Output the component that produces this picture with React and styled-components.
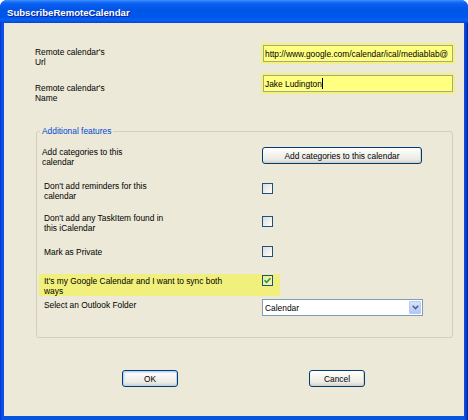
import React from "react";
import styled, { createGlobalStyle } from "styled-components";

const Global = createGlobalStyle`
  html, body { margin: 0; padding: 0; background: #ffffff; }
  body { font-family: "Liberation Sans", Arial, sans-serif; }
  * { box-sizing: border-box; }
`;

const Window = styled.div`
  width: 468px;
  height: 420px;
  display: flex;
  flex-direction: column;
  background: linear-gradient(to right, #0831d9 0px, #0a52e6 2px, #0855dd 4px, #0855dd 464px, #0a3fd0 466px, #001ea0 468px);
  border-radius: 7px 7px 0 0;
  overflow: hidden;
  font-family: "Liberation Sans", Arial, sans-serif;
`;

const TitleBar = styled.div`
  height: 23px;
  flex: none;
  display: flex;
  align-items: center;
  padding: 2px 0 0 7px;
  background: linear-gradient(to bottom, #3f95ff 0px, #1a6ff8 2px, #0a5ef0 4px, #0055e8 10px, #0056ec 17px, #0a5ff4 20px, #0048d8 23px);
  color: #ffffff;
  font-weight: bold;
  font-size: 9.6px;
  text-shadow: 1px 1px 0 #0a1e8c;
  letter-spacing: 0px;
`;

const Body = styled.div`
  flex: 1;
  margin: 0 4px 4px 4px;
  background: #ece9d8;
  padding: 20px 0 0 0;
  font-size: 8.4px;
  line-height: 10px;
  color: #000000;
`;

const TopRow = styled.div`
  display: grid;
  grid-template-columns: 226px 194px;
  height: ${(p) => p.$h}px;
  padding-left: 31px;
  align-items: start;
`;

const Label = styled.div`
  margin-top: ${(p) => p.$t || 0}px;
  margin-left: ${(p) => p.$l || 0}px;
  white-space: normal;
`;

const TextGlow = styled.div`
  padding: 2px;
  background: #f4f27e;
  width: 194px;
`;

const TextBox = styled.div`
  height: 17px;
  border: 1px solid #a4a98e;
  background: #ffff80;
  padding: 0 1px 0 1px;
  display: flex;
  align-items: center;
  white-space: nowrap;
  overflow: hidden;
`;

const Caret = styled.span`
  display: inline-block;
  width: 1px;
  height: 11px;
  background: #000000;
  margin-left: 0px;
`;

const Group = styled.fieldset`
  margin: ${(p) => p.$mt}px 0 0 32px;
  width: 417px;
  height: 212px;
  border: 1px solid #d0d0bf;
  border-radius: 3px;
  padding: 11px 0 0 0;
  min-width: 0;
`;

const Legend = styled.legend`
  margin-left: 3px;
  padding: 0 2px;
  color: #0046d5;
  font-size: 8.4px;
  line-height: 10px;
`;

const FieldRow = styled.div`
  display: grid;
  grid-template-columns: 218px auto;
  align-items: start;
  height: ${(p) => p.$h}px;
  margin-left: 2px;
  padding-left: 5px;
  width: ${(p) => (p.$hl ? "241px" : "auto")};
  background: ${(p) => (p.$hl ? "#f2f07c" : "transparent")};
`;

const Control = styled.div`
  margin-top: ${(p) => p.$t || 0}px;
`;

const XPButton = styled.button`
  width: ${(p) => p.$w}px;
  height: 17px;
  padding: 0;
  margin: 0;
  font-family: "Liberation Sans", Arial, sans-serif;
  font-size: 8.4px;
  color: #000000;
  border: 1px solid #003c74;
  border-radius: 3px;
  background: linear-gradient(to bottom, #ffffff 0%, #f5f4ef 40%, #ecebe6 75%, #d6d0c5 100%);
  box-shadow: ${(p) =>
    p.$default
      ? "inset 0 0 0 1px #bcd4f6, inset 1px 1px 0 1px #cee7ff"
      : "inset -1px -1px 0 #d8d2c6"};
  display: flex;
  align-items: center;
  justify-content: center;
`;

const Check = styled.div`
  width: 11px;
  height: 11px;
  border: 1px solid #1c5180;
  background: ${(p) =>
    p.$on
      ? "linear-gradient(135deg, #e8e8a8 0%, #f4f4b8 100%)"
      : "linear-gradient(135deg, #dcdcd7 0%, #f4f4f1 70%, #ffffff 100%)"};
  display: flex;
  align-items: center;
  justify-content: center;
`;

const Select = styled.div`
  width: 161px;
  height: 17px;
  border: 1px solid #7f9db9;
  background: #ffffff;
  display: flex;
  align-items: center;
  padding: 1px;
`;

const SelectText = styled.div`
  flex: 1;
  padding-left: 1px;
`;

const DropBtn = styled.div`
  width: 12px;
  height: 13px;
  border: 1px solid #bbcaf1;
  border-radius: 1px;
  background: linear-gradient(to bottom, #d6e2fd 0%, #c1d3fb 60%, #b0c6f6 100%);
  display: flex;
  align-items: center;
  justify-content: center;
`;

const Footer = styled.div`
  display: flex;
  gap: 131px;
  margin-top: 32px;
  padding-left: 118px;
`;

function CheckBox({ on }) {
  return (
    <Check $on={on}>
      {on && (
        <svg width="7" height="7" viewBox="0 0 7 7">
          <path d="M0.5 3.2 L2.6 5.3 L6.5 1.2" fill="none" stroke="#21a121" strokeWidth="1.6" />
        </svg>
      )}
    </Check>
  );
}

export default function App() {
  return (
    <>
      <Global />
      <Window>
        <TitleBar>SubscribeRemoteCalendar</TitleBar>
        <Body>
          <TopRow $h={30}>
            <Label $t={4}>
              Remote calendar's
              <br />
              Url
            </Label>
            <TextGlow>
              <TextBox>http://www.google.com/calendar/ical/mediablab@</TextBox>
            </TextGlow>
          </TopRow>
          <TopRow $h={30}>
            <Label $t={10}>
              Remote calendar's
              <br />
              Name
            </Label>
            <TextGlow>
              <TextBox>
                Jake Ludington
                <Caret />
              </TextBox>
            </TextGlow>
          </TopRow>
          <Group $mt={23}>
            <Legend>Additional features</Legend>
            <FieldRow $h={34}>
              <Label $l={-2}>
                Add categories to this
                <br />
                calendar
              </Label>
              <Control>
                <XPButton $w={160}>Add categories to this calendar</XPButton>
              </Control>
            </FieldRow>
            <FieldRow $h={32}>
              <Label>
                Don't add reminders for this
                <br />
                calendar
              </Label>
              <Control $t={2}>
                <CheckBox />
              </Control>
            </FieldRow>
            <FieldRow $h={32}>
              <Label>
                Don't add any TaskItem found in
                <br />
                this iCalendar
              </Label>
              <Control $t={3}>
                <CheckBox />
              </Control>
            </FieldRow>
            <FieldRow $h={29}>
              <Label $t={2}>Mark as Private</Label>
              <Control $t={1}>
                <CheckBox />
              </Control>
            </FieldRow>
            <FieldRow $h={22} $hl>
              <Label $t={2}>
                It's my Google Calendar and I want to sync both
                <br />
                ways
              </Label>
              <Control $t={1}>
                <CheckBox on />
              </Control>
            </FieldRow>
            <FieldRow $h={20} style={{ marginTop: 3 }}>
              <Label $t={1}>Select an Outlook Folder</Label>
              <Control $t={0}>
                <Select>
                  <SelectText>Calendar</SelectText>
                  <DropBtn>
                    <svg width="7" height="5" viewBox="0 0 7 5">
                      <path d="M0.7 0.8 L3.5 3.6 L6.3 0.8" fill="none" stroke="#4d6185" strokeWidth="1.5" />
                    </svg>
                  </DropBtn>
                </Select>
              </Control>
            </FieldRow>
          </Group>
          <Footer>
            <XPButton $w={56} $default>
              OK
            </XPButton>
            <XPButton $w={56}>Cancel</XPButton>
          </Footer>
        </Body>
      </Window>
    </>
  );
}
